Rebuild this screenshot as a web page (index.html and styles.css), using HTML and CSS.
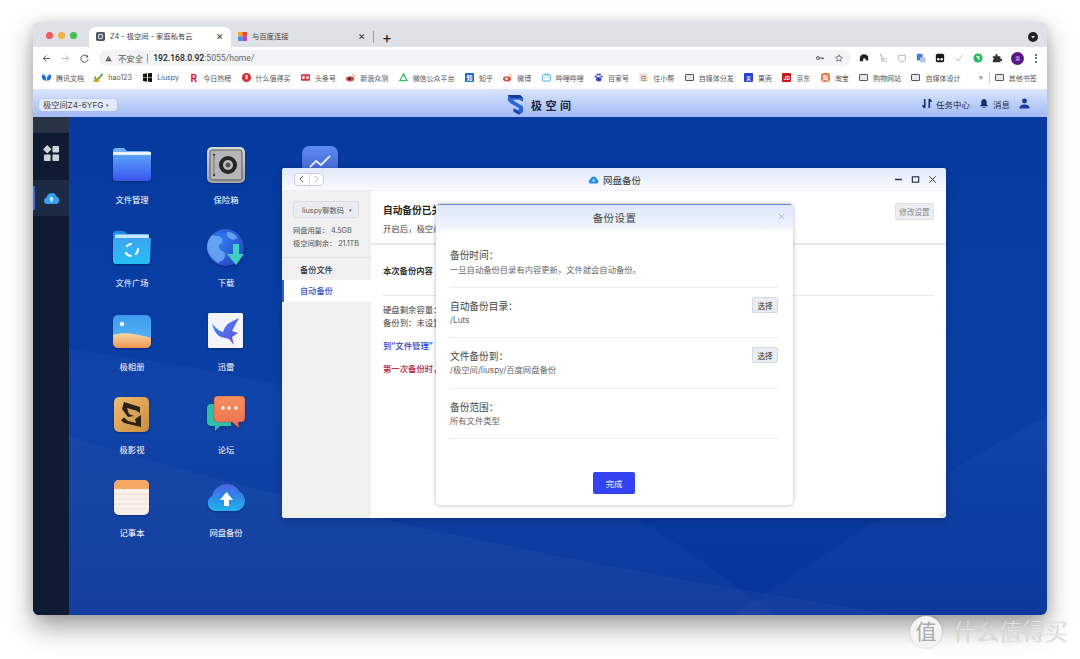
FILE: index.html
```html
<!DOCTYPE html>
<html lang="zh">
<head>
<meta charset="utf-8">
<title>极空间</title>
<link rel="stylesheet" href="styles.css">
</head>
<body>
<div class="browser">
  <div class="tabbar">
    <div class="lights"><i class="l-red"></i><i class="l-yellow"></i><i class="l-green"></i></div>
    <div class="tab active">
      <svg class="fav" viewBox="0 0 10 10"><rect width="10" height="10" rx="2" fill="#4d5563"/><rect x="3" y="2.500" width="4" height="5" rx="1" fill="none" stroke="#dfe3ea" stroke-width="1.200"/></svg>
      <span class="tab-title">Z4 - 极空间 - 家庭私有云</span><span class="tab-x">×</span>
    </div>
    <div class="tab">
      <svg class="fav" viewBox="0 0 10 10"><rect width="5" height="5" fill="#f6a623"/><rect x="5" width="5" height="5" fill="#e8453c"/><rect y="5" width="5" height="5" fill="#2f9ee8"/><rect x="5" y="5" width="5" height="5" fill="#b93fc4"/></svg>
      <span class="tab-title">与百度连接</span><span class="tab-x">×</span>
    </div>
    <span class="tab-sep"></span>
    <span class="tab-plus">+</span>
    <span class="tab-menu"><svg viewBox="0 0 10 10"><circle cx="5" cy="5" r="5" fill="#222"/><path d="M3 4h4L5 6.600z" fill="#ddd"/></svg></span>
  </div>

  <div class="toolbar">
    <svg class="nav" viewBox="0 0 10 10"><path d="M9 5H1.500M5 1.500 1.500 5 5 8.500" fill="none" stroke="#555" stroke-width="1.100"/></svg>
    <svg class="nav" viewBox="0 0 10 10"><path d="M1 5h7.500M5 1.500 8.500 5 5 8.500" fill="none" stroke="#b5b8bc" stroke-width="1.100"/></svg>
    <svg class="nav" viewBox="0 0 10 10"><path d="M8.500 3.200A4 4 0 1 0 9 5.500" fill="none" stroke="#555" stroke-width="1.100"/><path d="M9 .8v3H6z" fill="#555"/></svg>
    <div class="omnibox">
      <svg class="warn" viewBox="0 0 10 10"><path d="M5 1 9.500 9H.5z" fill="#555"/><path d="M5 4v2.500M5 7.200v.8" stroke="#f1f3f4" stroke-width=".9"/></svg>
      <span class="insecure">不安全</span><span class="omni-sep"></span>
      <span class="url"><b>192.168.0.92</b>:5055/home/</span>
      <span class="omni-right">
        <svg class="ti" viewBox="0 0 12 8"><circle cx="3" cy="4" r="2.200" fill="none" stroke="#444" stroke-width="1.300"/><path d="M5 4h6.500M9 4v2M11 4v1.500" stroke="#444" stroke-width="1.300"/></svg>
        <svg class="ti" viewBox="0 0 12 12"><path d="M6 1.200 7.500 4.500 11 5 8.500 7.400 9.100 10.900 6 9.200 2.900 10.900 3.500 7.400 1 5 4.500 4.500z" fill="none" stroke="#444"/></svg>
      </span>
    </div>
    <div class="exts">
      <svg viewBox="0 0 12 12"><path d="M1 10V6a5 5 0 0 1 8-3.500L11 4v5H8V6.500H5V10z" fill="#222"/></svg>
      <svg viewBox="0 0 12 12"><path d="M3 1 7 7H4.500L5 10.500z" fill="none" stroke="#b8bcc2"/><circle cx="8.500" cy="8.500" r="2" fill="none" stroke="#b8bcc2"/></svg>
      <svg viewBox="0 0 12 12"><path d="M2 2 4 3h4l2-1v5c0 2-2 3.500-4 3.500S2 9 2 7z" fill="none" stroke="#a9adb3"/></svg>
      <svg viewBox="0 0 12 12"><rect x="1" y="1" width="7" height="8" rx="1" fill="#4a7fd8"/><rect x="5" y="5" width="6.500" height="6.500" rx="1" fill="#b9c7da"/></svg>
      <svg viewBox="0 0 12 12"><rect x="1" y="1" width="10" height="10" rx="2" fill="#1a1a1a"/><circle cx="4" cy="7.500" r="1.500" fill="#fff"/><circle cx="8" cy="7.500" r="1.500" fill="#fff"/></svg>
      <svg viewBox="0 0 12 12"><path d="M1.500 6.500 4.500 9.500 10.500 2.500" fill="none" stroke="#a9adb3"/></svg>
      <svg viewBox="0 0 12 12"><circle cx="6" cy="6" r="5.500" fill="#21b95c"/><path d="M4 3.500 8 8.500M8 3.500 6.500 5.500" stroke="#fff" stroke-width="1.300"/></svg>
      <svg viewBox="0 0 12 12"><path d="M1 4h3V2.500a1.300 1.300 0 0 1 2.600 0V4H10v3h1.200a1.300 1.300 0 0 1 0 2.600H10V11H1V8.500a1.300 1.300 0 0 0 0-2.600z" fill="#333"/></svg>
      <svg class="avatar" viewBox="0 0 14 14"><circle cx="7" cy="7" r="7" fill="#5a148c"/><text x="7" y="9" font-size="5" text-anchor="middle" fill="#ddd">源</text></svg>
      <span class="dots"><i></i><i></i><i></i></span>
    </div>
  </div>

  <div class="bookmarks">
    <span class="bm"><svg class="bi" viewBox="0 0 10 10"><path d="M0 2h4.500v6.500C2 8.500 0 7 0 5zM5.500 2H10v3c0 2-2 3.500-4.500 3.500z" fill="#1d6fe0"/><path d="M3 2h4v2H3z" fill="#fff"/></svg>腾讯文档</span>
    <span class="bm hao"><svg class="bi wide" viewBox="0 0 11 10"><path d="M1 4 4 8 10 1" fill="none" stroke="#64a83a" stroke-width="2"/><path d="M0 7h6v3H0z" fill="#e59a2d"/></svg>hao123</span>
    <span class="bm"><svg class="bi" viewBox="0 0 10 10"><path d="M0 1 4.500.4V4.600H0zM5.500.3 10 0V4.600H5.500zM0 5.400H4.500V9.600L0 9zM5.500 5.400H10V10L5.500 9.700z" fill="#111"/></svg>Liuspy</span>
    <span class="bm"><i class="bi glyph g-r">R</i>今日热榜</span>
    <span class="bm"><svg class="bi" viewBox="0 0 10 10"><circle cx="5" cy="5" r="5" fill="#d92b2b"/><rect x="3.500" y="2" width="3" height="5" fill="#f3c0c0"/></svg>什么值得买</span>
    <span class="bm"><svg class="bi" viewBox="0 0 10 10"><rect y="1.500" width="10" height="7" rx="1" fill="#e0343c"/><rect x="1.500" y="3.500" width="2.500" height="3" fill="#fff"/><rect x="6" y="3.500" width="2.500" height="3" fill="#fff"/></svg>头条号</span>
    <span class="bm"><svg class="bi" viewBox="0 0 10 10"><ellipse cx="4.500" cy="6.500" rx="4.500" ry="3" fill="#d8473f"/><circle cx="4" cy="6.500" r="1.400" fill="#222"/><path d="M6.500 1.500C8.500 1.500 9.500 3 9.500 4.500" fill="none" stroke="#e89a3c"/></svg>新浪众测</span>
    <span class="bm"><svg class="bi" viewBox="0 0 10 10"><path d="M5 1 9 8.500H1z" fill="none" stroke="#3fb968" stroke-width="1.500"/></svg>微信公众平台</span>
    <span class="bm"><i class="bi glyph g-zhi">知</i>知乎</span>
    <span class="bm"><svg class="bi" viewBox="0 0 10 10"><ellipse cx="4.500" cy="6.500" rx="4.500" ry="3" fill="#d8503f"/><circle cx="4" cy="6.500" r="1.400" fill="#fff"/><path d="M6.500 1.500C8.500 1.500 9.500 3 9.500 4.500" fill="none" stroke="#e8b03c"/></svg>微博</span>
    <span class="bm"><svg class="bi" viewBox="0 0 10 10"><rect x=".5" y="2" width="9" height="7" rx="1.500" fill="none" stroke="#2fa7dd"/><path d="M3 .5 4.500 2M7 .5 5.500 2M3 5v1M7 5v1" stroke="#2fa7dd"/></svg>哔哩哔哩</span>
    <span class="bm"><svg class="bi" viewBox="0 0 10 10" fill="#3340c4"><circle cx="2" cy="4" r="1.200"/><circle cx="4" cy="1.800" r="1.200"/><circle cx="6.500" cy="1.800" r="1.200"/><circle cx="8.500" cy="4" r="1.200"/><ellipse cx="5.200" cy="7" rx="3" ry="2.500"/></svg>百家号</span>
    <span class="bm"><i class="bi glyph g-zhu">住</i>住小帮</span>
    <span class="bm"><i class="bi folder"></i>自媒体分发</span>
    <span class="bm"><i class="bi glyph g-guo">果</i>果壳</span>
    <span class="bm"><i class="bi glyph g-jd">JD</i>京东</span>
    <span class="bm"><i class="bi glyph g-tao">淘</i>淘宝</span>
    <span class="bm"><i class="bi folder"></i>购物网站</span>
    <span class="bm"><i class="bi folder"></i>自媒体设计</span>
    <span class="bm-more">»</span>
    <span class="bm-sep"></span>
    <span class="bm"><i class="bi folder"></i>其他书签</span>
  </div>

  <header class="apphead">
    <span class="chip">极空间Z4-6YFG <small>▾</small></span>
    <div class="brand">
      <svg viewBox="0 0 18 22"><path d="M1 1h13l3 3v4l-4-2H6l4 3 7 4v6l-4 3-6-3v-4l5 2 1-2-9-5-3-3z" fill="#2a66d8"/><path d="M1 1h13l3 3H5zM7 16l6 3v2l-6-3z" fill="#17398f"/></svg>
      <span>极空间</span>
    </div>
    <div class="headright">
      <span class="hitem"><svg viewBox="0 0 11 12"><path d="M3 1v10M3 11 .5 8M8 11V1M8 1l2.500 3" fill="none" stroke="#18306f" stroke-width="1.800"/></svg>任务中心</span>
      <span class="hitem"><svg viewBox="0 0 11 12"><path d="M5.500 1C3.500 1 2.500 2.700 2.500 4.500V7L1 9h9L8.500 7V4.500C8.500 2.700 7.500 1 5.500 1z" fill="#18306f"/><path d="M4 10h3v1H4z" fill="#18306f"/></svg>消息</span>
      <svg class="user" viewBox="0 0 12 12"><circle cx="6" cy="3.200" r="2.700" fill="#1c3aa0"/><path d="M.5 11.500C.5 8 3 7 6 7s5.500 1 5.500 4.500z" fill="#1c3aa0"/></svg>
    </div>
  </header>

  <main class="desktop">
    <svg class="wall" viewBox="0 0 1014 498" preserveAspectRatio="none"><path d="M36 232 C250 262 500 300 740 498H36z" fill="#fff" opacity=".025"/><path d="M36 320 C300 400 650 470 1014 520V498H36z" fill="#fff" opacity=".03"/><path d="M700 498 C820 420 930 340 1014 300V498z" fill="#fff" opacity=".025"/></svg>
    <nav class="dock">
      <div class="dock-top"></div>
      <div class="dock-cell home">
        <svg viewBox="0 0 18 18"><path d="M4.500 0 9 4.500 4.500 9 0 4.500z" fill="#cfd3da"/><rect x="10" y="1" width="7" height="7" rx="1" fill="#cfd3da"/><rect x="1" y="10" width="7" height="7" rx="1" fill="#cfd3da"/><rect x="10" y="10" width="7" height="7" rx="1" fill="#cfd3da"/></svg>
      </div>
      <div class="dock-cell on">
        <svg viewBox="0 0 20 14"><path d="M5 13.500a4 4 0 0 1-1-7.800C5 2.500 7.500.5 10.500.5c2.800 0 5 1.800 5.700 4.500A4.400 4.400 0 0 1 15.500 13.500z" fill="#39a0ee"/><path d="M10 4.500 12.700 8H11v3H9V8H7.300z" fill="#fff"/></svg>
      </div>
    </nav>

    <div class="apps">
      <div class="app"><svg viewBox="0 0 38 38"><defs><linearGradient id="g1" x1="0" y1="0" x2="0" y2="1"><stop offset="0" stop-color="#5aa0f7"/><stop offset="1" stop-color="#3b55ee"/></linearGradient></defs><path d="M0 5a3 3 0 0 1 3-3h8l3 3h21a3 3 0 0 1 3 3v4H0z" fill="#6cb2f5"/><rect y="6" width="38" height="3" fill="#e9f3fd"/><path d="M0 9h38v23a3 3 0 0 1-3 3H3a3 3 0 0 1-3-3z" fill="url(#g1)"/></svg><span>文件管理</span></div>
      <div class="app"><svg viewBox="0 0 38 38"><defs><linearGradient id="g3" x1="0" y1="0" x2="0" y2="1"><stop offset="0" stop-color="#3ea4f0"/><stop offset="1" stop-color="#23c0f5"/></linearGradient></defs><path d="M0 5a3 3 0 0 1 3-3h8l3 3h19a3 3 0 0 1 3 3v5H0z" fill="#1e8fe8"/><rect x="2" y="5.500" width="34" height="4" fill="#c5e6fb"/><path d="M0 9h38l-1 23a3 3 0 0 1-3 3H3a3 3 0 0 1-3-3z" fill="url(#g3)"/><g fill="none" stroke="#fff" stroke-width="2.200" stroke-linecap="round"><path d="M14 17a7 7 0 0 1 4-2"/><path d="M25 20a7 7 0 0 1-2 5"/><path d="M13 24a6 6 0 0 0 5 3"/></g></svg><span>文件广场</span></div>
      <div class="app"><svg viewBox="0 0 38 38"><defs><linearGradient id="g5" x1="0" y1="0" x2="0" y2="1"><stop offset="0" stop-color="#3c9bef"/><stop offset="1" stop-color="#5dbdf3"/></linearGradient><linearGradient id="g6" x1="0" y1="0" x2="0" y2="1"><stop offset="0" stop-color="#f8d8a8"/><stop offset="1" stop-color="#ee9550"/></linearGradient></defs><rect y="2" width="38" height="33" rx="5" fill="url(#g5)"/><circle cx="9" cy="11" r="2.300" fill="#fff" opacity=".9"/><path d="M0 22c10-3 20-2 38 3v5a5 5 0 0 1-5 5H5a5 5 0 0 1-5-5z" fill="url(#g6)"/></svg><span>极相册</span></div>
      <div class="app"><svg viewBox="0 0 38 38"><defs><linearGradient id="g8" x1="0" y1="0" x2="1" y2="1"><stop offset="0" stop-color="#eeba72"/><stop offset="1" stop-color="#c98e3f"/></linearGradient></defs><rect x="1" y="1" width="35" height="35" rx="5" fill="url(#g8)"/><path d="M11 6 27 11 27 17 23 14.500 14 12 16 18 21 20 15 21 9 13zM28 19 28 31 11 27 8 24 11 21.500 15 25 23 27 22 23z" fill="#2b2218"/></svg><span>极影视</span></div>
      <div class="app"><svg viewBox="0 0 38 38"><rect x="1" y="1" width="35" height="35" rx="5" fill="#f8f0ea"/><path d="M1 6a5 5 0 0 1 5-5h25a5 5 0 0 1 5 5v4H1z" fill="#f5a765"/><path d="M1 15h35M1 20h35M1 25h35M1 30h35" stroke="#efdcd2"/></svg><span>记事本</span></div>
      <div class="app"><svg viewBox="0 0 38 38"><defs><linearGradient id="g2" x1="0" y1="0" x2="0" y2="1"><stop offset="0" stop-color="#d9dadb"/><stop offset="1" stop-color="#a2a4a6"/></linearGradient></defs><rect width="38" height="36" y="1" rx="5" fill="url(#g2)"/><rect x="3" y="4" width="32" height="30" rx="2" fill="#b5b6b7" stroke="#56585a"/><circle cx="21" cy="19" r="9" fill="#262626"/><circle cx="21" cy="19" r="5" fill="#bdbdbd"/><circle cx="21" cy="19" r="2.500" fill="#555"/><circle cx="7" cy="9" r="1.200" fill="#333"/><circle cx="7" cy="29" r="1.200" fill="#333"/><rect x="6.500" y="9" width="1" height="20" fill="#777"/></svg><span>保险箱</span></div>
      <div class="app"><svg viewBox="0 0 38 38"><defs><radialGradient id="g4" cx=".35" cy=".35" r=".8"><stop offset="0" stop-color="#2f7df2"/><stop offset="1" stop-color="#2545c4"/></radialGradient></defs><circle cx="18.500" cy="18.500" r="18.500" fill="url(#g4)"/><path d="M5 6c5 2 8 0 10 4s-5 5-3 9 6 2 6 7-4 6-7 8C5 30 0 24 0 18 0 13 2 9 5 6zM20 3c5 0 9 3 11 6l-5 2c-3-2-7-2-6-8z" fill="#79b4f7" opacity=".75"/><path d="M26 15h6v10h5L29 36l-9-11h6z" fill="#3fd0c2"/></svg><span>下载</span></div>
      <div class="app"><svg viewBox="0 0 38 38"><defs><linearGradient id="g7" x1="0" y1="0" x2="1" y2="1"><stop offset="0" stop-color="#2e9bf0"/><stop offset="1" stop-color="#7a3fe0"/></linearGradient></defs><rect x="1" width="35" height="35" rx="1.500" fill="#f3f5fb"/><path d="M32 5 22 10c-4 3-5 6-6 9-4-1-7-4-11-8 2 6 4 11 9 13l8 2 5 6-2-8 6-4-6-2z" fill="url(#g7)"/></svg><span>迅雷</span></div>
      <div class="app"><svg viewBox="0 0 38 38"><defs><linearGradient id="g9" x1="0" y1="0" x2="0" y2="1"><stop offset="0" stop-color="#f6905f"/><stop offset="1" stop-color="#ef6f52"/></linearGradient></defs><path d="M4 8h20v22H13l-5 5v-5H4a4 4 0 0 1-4-4V12a4 4 0 0 1 4-4z" fill="#2ebeaa"/><path d="M11 0h23a4 4 0 0 1 4 4v18a4 4 0 0 1-4 4h-3l1 6-7-6H11a4 4 0 0 1-4-4V4a4 4 0 0 1 4-4z" fill="url(#g9)" stroke="#b04a3a" stroke-width=".5"/><circle cx="16" cy="12" r="1.700" fill="#fff"/><circle cx="22" cy="12" r="1.700" fill="#fff"/><circle cx="29" cy="12" r="1.700" fill="#fff"/></svg><span>论坛</span></div>
      <div class="app"><svg viewBox="0 0 38 38"><defs><linearGradient id="g10" x1="0" y1="0" x2="0" y2="1"><stop offset="0" stop-color="#4b5fe8"/><stop offset=".55" stop-color="#2b8fe8"/><stop offset="1" stop-color="#25b4ee"/></linearGradient></defs><path d="M8 32a8 8 0 0 1-3-15C7 9 13 5 20 5c6 0 10 3 13 8 3 1 5 5 5 9a10 10 0 0 1-9 10z" fill="url(#g10)"/><path d="M19.500 13 26 21h-4v6h-5v-6h-4z" fill="#fff"/></svg><span>网盘备份</span></div>
      <div class="app"><svg viewBox="0 0 38 38"><defs><linearGradient id="g11" x1="0" y1="0" x2="0" y2="1"><stop offset="0" stop-color="#5d8cf0"/><stop offset="1" stop-color="#3b56c8"/></linearGradient></defs><rect width="36" height="36" x="1" rx="7" fill="url(#g11)"/><path d="M9 21 15 15 20 19 29 10" fill="none" stroke="#e8eefc" stroke-width="1.800"/></svg></div>
    </div>

    <section class="win">
      <div class="win-title">
        <div class="pager"><span><svg viewBox="0 0 6 10"><path d="M5 1 1 5l4 4" fill="none" stroke="#333"/></svg></span><span><svg viewBox="0 0 6 10"><path d="M1 1l4 4-4 4" fill="none" stroke="#aaa"/></svg></span></div>
        <div class="win-name"><svg viewBox="0 0 20 14"><path d="M5 13.500a4 4 0 0 1-1-7.800C5 2.500 7.500.5 10.500.5c2.800 0 5 1.800 5.700 4.500A4.400 4.400 0 0 1 15.500 13.500z" fill="#2a8fe0"/><path d="M10 5 12.500 8H11v2.500H9V8H7.500z" fill="#fff"/></svg>网盘备份</div>
        <div class="win-ctl">
          <svg viewBox="0 0 10 10"><path d="M1 5h8" stroke="#2c3445" stroke-width="1.400"/></svg>
          <svg viewBox="0 0 10 10"><rect x="1.500" y="2" width="7" height="6" fill="none" stroke="#2c3445" stroke-width="1.300"/></svg>
          <svg viewBox="0 0 10 10"><path d="M1.500 1.500l7 7M8.500 1.500l-7 7" stroke="#2c3445" stroke-width="1.100"/></svg>
        </div>
      </div>
      <div class="win-body">
        <aside class="side">
          <div class="acct">
            <div class="select"><span>liuspy聊数码</span><small>▾</small></div>
            <p>网盘用量： 4.5GB</p>
            <p>极空间剩余： 21.1TB</p>
          </div>
          <div class="side-item">备份文件</div>
          <div class="side-item cur">自动备份</div>
        </aside>
        <div class="content">
          <div class="status">
            <div><h3>自动备份已关</h3><p>开启后，极空间</p></div>
            <button class="btn-gray">修改设置</button>
          </div>
          <div class="scope"><h4>本次备份内容</h4></div>
          <div class="details">
            <p>硬盘剩余容量：</p>
            <p>备份到：未设置</p>
            <p class="t-blue">到“文件管理”</p>
            <p class="t-red">第一次备份时，</p>
          </div>
        </div>
      </div>
      <svg class="grip" viewBox="0 0 6 6"><path d="M6 1 1 6M6 3 3 6M6 5 5 6" stroke="#b8bcc4" stroke-width=".7"/></svg>

      <div class="dialog">
        <div class="dlg-title">备份设置<svg viewBox="0 0 8 8"><path d="M1 1l6 6M7 1 1 7" stroke="#9aa0a8" stroke-width=".8"/></svg></div>
        <div class="dlg-body">
          <div class="row first"><div><h5>备份时间：</h5><p>一旦自动备份目录有内容更新，文件就会自动备份。</p></div></div>
          <div class="row"><div><h5>自动备份目录：</h5><p>/Luts</p></div><button class="btn-pick">选择</button></div>
          <div class="row"><div><h5>文件备份到：</h5><p>/极空间/liuspy/百度网盘备份</p></div><button class="btn-pick">选择</button></div>
          <div class="row"><div><h5>备份范围：</h5><p>所有文件类型</p></div></div>
          <button class="btn-done">完成</button>
        </div>
      </div>
    </section>
  </main>
</div>

<div class="watermark"><span class="wm-badge">值</span><span class="wm-text">什么值得买</span></div>
</body>
</html>
```
FILE: styles.css
```css
* { box-sizing: border-box; }
html, body { margin: 0; height: 100%; overflow: hidden; background: #fff; }
body {
  padding: 22px 33px 0;
  font-family: Inter, "Noto Sans CJK SC", sans-serif;
  color: #333;
}
p, h3, h4, h5 { margin: 0; font-weight: normal; }
button { font-family: inherit; padding: 0; cursor: default; }

.browser {
  width: 1014px; height: 593px;
  display: flex; flex-direction: column;
  border-radius: 6px; overflow: hidden;
  box-shadow: 0 12px 26px rgba(0,0,0,.38), 0 0 12px rgba(0,0,0,.1);
}

/* tabs */
.tabbar { height: 25px; flex: none; background: #dee1e6; display: flex; align-items: flex-end; position: relative; }
.lights { display: flex; gap: 5px; width: 56px; padding: 0 0 8px 13px; align-self: flex-end; }
.lights i { width: 7px; height: 7px; border-radius: 50%; }
.l-red { background: #ee5a52; } .l-yellow { background: #f4b03d; } .l-green { background: #3dc04e; }
.tab { width: 142px; height: 20px; display: flex; align-items: center; padding: 0 7px 2px; font-size: 7.300px; color: #444; }
.tab.active { background: #fff; border-radius: 6px 6px 0 0; }
.fav { width: 9px; height: 9px; margin-right: 5px; flex: none; }
.tab-title { flex: 1; white-space: nowrap; }
.tab-x { font-size: 11px; color: #333; width: 8px; }
.tab-sep { width: 1px; height: 12px; background: #9a9da2; margin: 0 0 4px 0; }
.tab-plus { font-size: 15px; line-height: 18px; margin-left: 8px; color: #222; }
.tab-menu { position: absolute; right: 9px; top: 10px; width: 10px; height: 10px; display: flex; }

/* toolbar */
.toolbar { height: 20px; flex: none; background: #fff; display: flex; align-items: center; padding: 2px 0 0 9px; }
.nav { width: 9px; height: 9px; margin-right: 10px; flex: none; }
.omnibox { width: 752px; height: 16px; background: #f1f3f4; border-radius: 8px; display: flex; align-items: center; padding: 0 8px 0 6px; font-size: 8.400px; }
.warn { width: 7px; height: 7px; margin-right: 6px; }
.insecure { color: #555; }
.omni-sep { width: 1px; height: 9px; background: #9a9da2; margin: 0 5px 0 4px; }
.url { color: #666; font-family: Roboto, sans-serif; font-size: 8.600px; }
.url b { color: #222; font-weight: 500; }
.omni-right { margin-left: auto; display: flex; align-items: center; gap: 11px; }
.ti { width: 8px; height: 8px; }
.exts { display: flex; align-items: center; gap: 9px; padding-left: 8px; }
.exts svg { width: 10px; height: 10px; flex: none; }
.exts .avatar { width: 13px; height: 13px; }
.dots { display: flex; flex-direction: column; gap: 1.500px; margin-left: 2px; }
.dots i { width: 2px; height: 2px; background: #444; border-radius: 50%; }

/* bookmarks */
.bookmarks { height: 22px; flex: none; background: #fff; display: flex; align-items: center; padding: 0 0 1px 9px; font-size: 7px; color: #555; white-space: nowrap; }
.bm { display: inline-flex; align-items: center; margin-right: 10.350px; }
.bm.hao { margin-right: 11.500px; }
.bi { width: 9px; height: 9px; margin-right: 5px; flex: none; }
.bi.wide { width: 11px; margin-left: -1px; margin-right: 4px; }
.glyph { display: flex; align-items: center; justify-content: center; font-style: normal; font-size: 6px; font-weight: 700; border-radius: 1px; color: #fff; }
.g-r { color: #d8203a; font-size: 10px; }
.g-zhi { background: #1769d8; }
.g-zhu { color: #d9862c; background: #e4ecf8; }
.g-guo { background: #2a3fd6; font-size: 5px; font-weight: 400; }
.g-jd { background: #c9171e; font-size: 5px; }
.g-tao { background: #e8743b; border-radius: 3px; }
.folder { height: 7px; background: #e8e9eb; border: 1px solid #555; border-radius: 1px; }
.bm-more { margin-left: 8px; width: 11px; color: #666; }
.bm-sep { width: 1px; height: 11px; background: #c8cacd; margin: 0 5px 0 0; }

/* app header */
.apphead {
  height: 28px; flex: none; display: flex; align-items: center; position: relative; padding: 3px 17px 0 6px;
  background: linear-gradient(180deg, #dbe6fd 0%, #b8cbf8 60%, #a4bbf4 100%);
}
.chip { background: #e2e9f8; border-radius: 3px; font-size: 8.200px; padding: 0 4px; height: 12px; line-height: 12px; color: #444; width: 78px; white-space: nowrap; box-shadow: 0 0 1px rgba(40,60,120,.4); }
.chip small { font-size: 5px; color: #666; vertical-align: 1px; }
.brand { position: absolute; left: 474px; top: 5px; display: flex; align-items: center; gap: 7px; font-size: 11px; font-weight: 700; letter-spacing: 3.500px; color: #1c2540; }
.brand svg { width: 17px; height: 21px; }
.headright { margin: 0 0 2px auto; display: flex; align-items: center; gap: 9px; }
.hitem { display: inline-flex; align-items: center; gap: 4px; font-size: 8.500px; color: #1f2a44; }
.hitem svg { width: 10px; height: 11px; }
.user { width: 11px; height: 11px; }

/* desktop */
.desktop { flex: 1; position: relative; display: flex; background: linear-gradient(180deg, #063a9f 0%, #0a40a6 60%, #08349a 100%); }
.wall { position: absolute; inset: 0; width: 100%; height: 100%; }
.dock { width: 36px; flex: none; background: #0f1b33; position: relative; }
.dock-top { height: 16px; background: #2a3246; }
.dock-cell { height: 47px; display: flex; align-items: center; justify-content: center; position: relative; }
.dock-cell.home { padding-bottom: 7px; }
.dock-cell svg { width: 17px; height: 17px; }
.dock-cell.on { height: 36px; background: #1d2a44; }
.dock-cell.on::before { content: ""; position: absolute; left: 0; top: 6px; bottom: 6px; width: 2px; background: #3f67e8; }
.apps {
  position: relative; padding: 29px 0 0 16px;
  display: grid; grid-auto-flow: column; grid-template-rows: repeat(5, 83.250px); grid-auto-columns: 94px;
  align-content: start;
}
.app { display: flex; flex-direction: column; align-items: center; color: #fff; font-size: 8.300px; }
.app svg { width: 38px; height: 38px; filter: drop-shadow(0 1px 1px rgba(0,0,40,.35)); }
.app span { margin-top: 10px; line-height: 12px; }

/* window */
.win { position: absolute; left: 249px; top: 51px; width: 664px; height: 350px; background: #fff; border-radius: 3px; box-shadow: 0 2px 8px rgba(0,0,40,.25); overflow: hidden; display: flex; flex-direction: column; }
.win-title { height: 23px; flex: none; display: flex; align-items: center; justify-content: space-between; position: relative; padding: 0 9px 0 12px; background: linear-gradient(180deg, #e1eafa, #f8fafe); border-bottom: 1px solid #eceff4; }
.pager { display: flex; width: 30px; height: 13px; border: 1px solid #c9ced6; border-radius: 4px; background: #fff; }
.pager span { flex: 1; display: flex; align-items: center; justify-content: center; }
.pager span + span { border-left: 1px solid #d8dce2; }
.pager svg { width: 5px; height: 8px; }
.win-name { position: absolute; left: 306px; top: 0; height: 23px; display: flex; align-items: center; gap: 4px; font-size: 9.500px; color: #333; }
.win-name svg { width: 11px; height: 8px; }
.win-ctl { display: flex; gap: 8px; }
.win-ctl svg { width: 9px; height: 9px; }
.win-body { flex: 1; display: flex; min-height: 0; }
.side { width: 89px; flex: none; background: #f0f0f0; font-size: 7.300px; color: #555; }
.acct { height: 67px; padding: 10px 11px 0; border-bottom: 1px solid #e2e3e5; }
.select { width: 66px; height: 17px; background: #e9edf3; border: 1px solid #d8dde5; border-radius: 2px; display: flex; align-items: center; justify-content: space-between; padding: 0 6px 0 8px; color: #555; margin-bottom: 6px; white-space: nowrap; }
.select small { font-size: 5px; }
.acct p { line-height: 13px; white-space: nowrap; letter-spacing: -.1px; }
.side-item { height: 22px; line-height: 24px; padding-left: 18px; font-size: 8.200px; font-weight: 500; color: #333; }
.side-item.cur { background: #fff; color: #3d4ec5; line-height: 23px; box-shadow: inset 2px 0 0 #2c62d8; }
.content { flex: 1; min-width: 0; font-size: 8.400px; }
.status { height: 54px; padding: 12px 12px 0; display: flex; justify-content: space-between; align-items: flex-start; border-bottom: 2px solid #e8e8e8; white-space: nowrap; }
.status h3 { font-size: 9.700px; font-weight: 700; color: #222; line-height: 16px; }
.status p { line-height: 20px; color: #444; }
.btn-gray { width: 39px; height: 17px; background: #eceef1; border: 1px solid #dcdfe4; border-radius: 2px; font-size: 7.600px; color: #888; }
.scope { margin: 0 12px; height: 51px; display: flex; align-items: center; border-bottom: 1px solid #e8e8e8; }
.scope h4 { font-size: 8.300px; font-weight: 700; color: #333; }
.details { padding: 8px 12px 0; white-space: nowrap; color: #444; }
.details p { line-height: 13px; }
.details .t-blue { margin-top: 10px; color: #2d3ec4; font-weight: 500; }
.details .t-red { margin-top: 10px; color: #b5213f; font-weight: 500; }
.grip { position: absolute; right: 1px; bottom: 1px; width: 6px; height: 6px; }

/* dialog */
.dialog { position: absolute; left: 154px; top: 36px; width: 357px; height: 301px; background: #fff; border-radius: 4px; box-shadow: 0 0 4px rgba(0,0,30,.3); overflow: hidden; }
.dlg-title { height: 26px; padding-bottom: 1px; border-top: 1px solid #6d8ac6; background: linear-gradient(180deg, #dce7f9, #f3f6fd); display: flex; align-items: center; justify-content: center; font-size: 10.500px; color: #444; letter-spacing: .4px; position: relative; }
.dlg-title svg { position: absolute; right: 8px; top: 8px; width: 7px; height: 7px; }
.dlg-body { padding: 0 15px 0 14px; display: flex; flex-direction: column; }
.row { height: 50.400px; flex: none; display: flex; justify-content: space-between; align-items: flex-start; border-bottom: 1px solid #ececec; padding-top: 11px; }
.row.first { height: 58px; padding-top: 18px; }
.row h5 { font-size: 9.700px; color: #444; line-height: 15px; }
.row p { font-size: 8.300px; line-height: 15px; color: #666; white-space: nowrap; margin-top: -1px; }
.row.first p { margin-top: 0; }
.btn-pick { width: 26px; height: 16px; margin-top: -2px; background: #e8edf3; border: 1px solid #d2d9e2; border-radius: 2px; font-size: 7.500px; color: #333; }
.btn-done { align-self: center; margin-top: 33px; width: 42px; height: 22px; background: #3343f2; border: 0; border-radius: 2px; color: #fff; font-size: 8.300px; }

/* watermark */
.watermark { position: absolute; left: 910px; top: 616px; display: flex; align-items: center; gap: 11px; color: #e4e4e4; }
.wm-badge { width: 32px; height: 32px; border-radius: 50%; background: #f4f4f4; color: #aaa; font-size: 21px; line-height: 31px; text-align: center; box-shadow: 0 0 2px rgba(0,0,0,.25); }
.wm-text { font-size: 23px; line-height: 32px; font-weight: 300; text-shadow: 0 0 1px #aaa; white-space: nowrap; }
```
